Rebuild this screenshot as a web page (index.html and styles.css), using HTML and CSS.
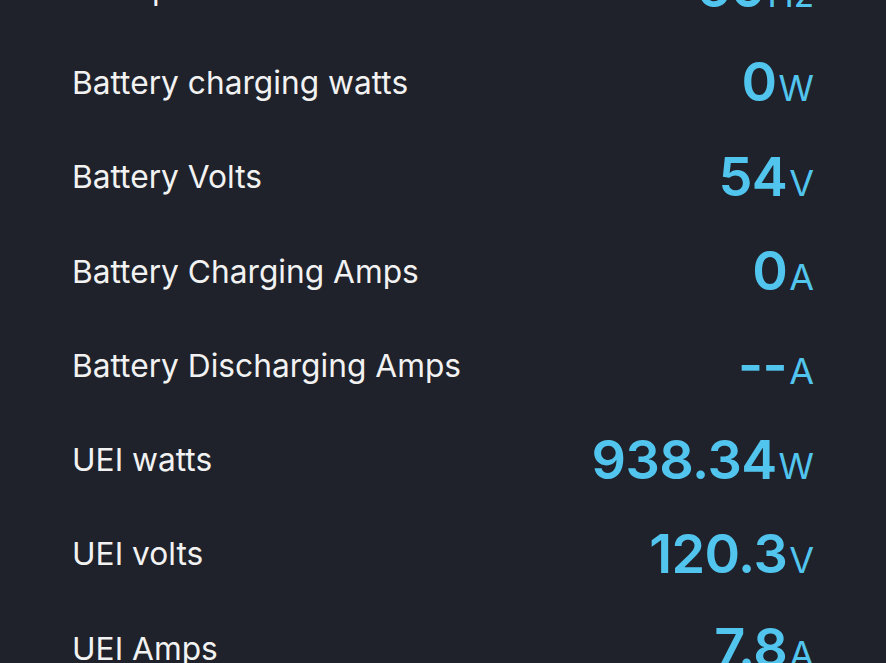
FILE: index.html
```html
<!DOCTYPE html>
<html lang="en">
<head>
    <meta charset="UTF-8">
    <meta name="viewport" content="width=device-width, initial-scale=1.0">
    <title>Inverter Status</title>
    <link rel="stylesheet" href="styles.css">
</head>
<body>
    <div class="stats">
        <div class="row">
            <span class="label">AC Input Hz</span>
            <span class="value">60<span class="unit">Hz</span></span>
        </div>
        <div class="row">
            <span class="label">Battery charging watts</span>
            <span class="value">0<span class="unit">W</span></span>
        </div>
        <div class="row">
            <span class="label">Battery Volts</span>
            <span class="value">54<span class="unit">V</span></span>
        </div>
        <div class="row">
            <span class="label">Battery Charging Amps</span>
            <span class="value">0<span class="unit">A</span></span>
        </div>
        <div class="row">
            <span class="label">Battery Discharging Amps</span>
            <span class="value">--<span class="unit">A</span></span>
        </div>
        <div class="row">
            <span class="label">UEI watts</span>
            <span class="value">938.34<span class="unit">W</span></span>
        </div>
        <div class="row">
            <span class="label">UEI volts</span>
            <span class="value">120.3<span class="unit">V</span></span>
        </div>
        <div class="row">
            <span class="label">UEI Amps</span>
            <span class="value">7.8<span class="unit">A</span></span>
        </div>
    </div>
</body>
</html>
```

FILE: styles.css
```css
body {
    margin: 0;
    padding: 0;
    height: 100vh;
    overflow: hidden;
    background-color: #1f222b;
    font-family: Inter, "Noto Sans", sans-serif;
}

.stats {
    display: flex;
    flex-direction: column;
    margin-top: -59px;
    padding: 0 72px;
}

.row {
    display: flex;
    align-items: center;
    justify-content: space-between;
    height: 94.3px;
    flex-shrink: 0;
}

.label {
    color: #f2f2f2;
    font-size: 31.7px;
    font-weight: 400;
}

.value {
    color: #52c5ee;
    font-size: 54px;
    font-weight: 600;
    line-height: 1;
    letter-spacing: -0.6px;
}

.unit {
    font-size: 36px;
    font-weight: 400;
    letter-spacing: 0;
    margin-left: 2px;
}
```
